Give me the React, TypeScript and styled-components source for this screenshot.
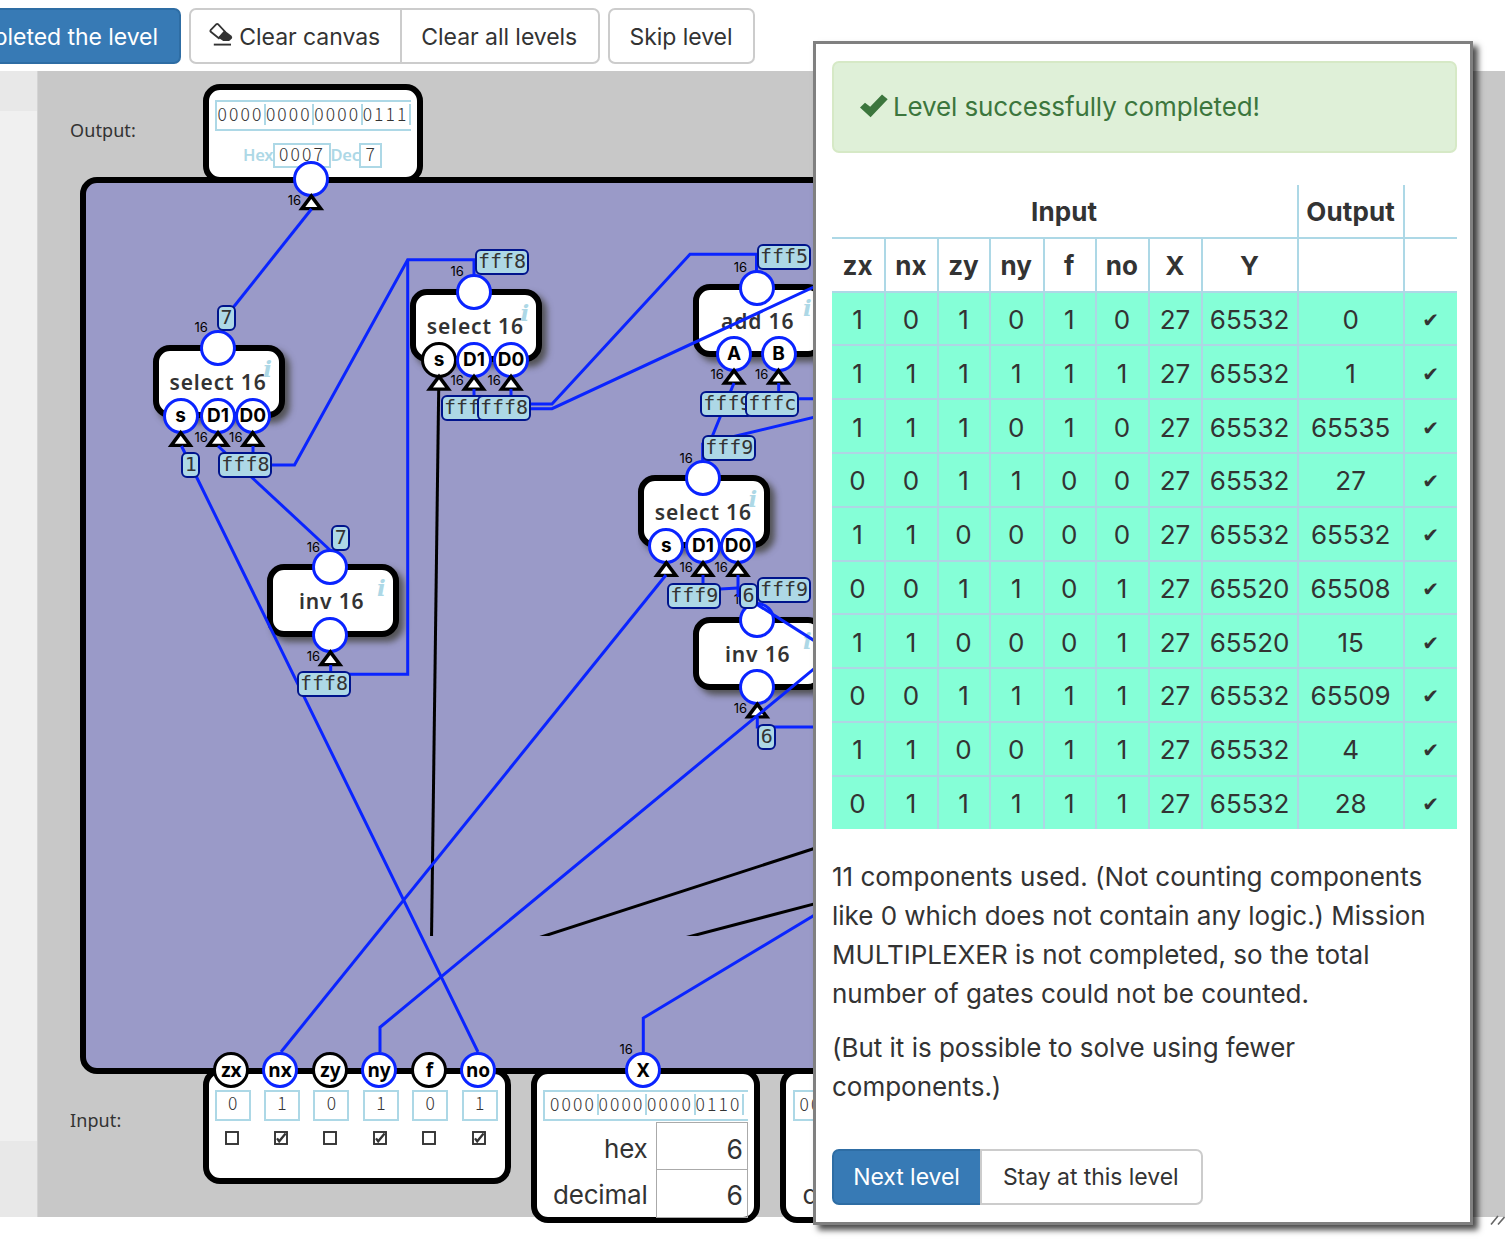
import React from 'react';
import styled, { createGlobalStyle } from 'styled-components';

const BLUE = '#0a24ff';
const PALE = '#add8e6';
const UI = 'Inter, "Liberation Sans", sans-serif';
const LABEL = '"Noto Sans", "Open Sans", sans-serif';

const GlobalStyle = createGlobalStyle`
  * { box-sizing: border-box; }
  html, body { margin: 0; background: #fff; }
  body { font-family: ${UI}; color: #333; overflow: hidden; }
`;

const Page = styled.div`
  position: relative;
  width: 1512px;
  height: 1240px;
  overflow: hidden;
  background: #fff;
`;

/* ---------- toolbar ---------- */

const Toolbar = styled.header`
  display: flex;
  gap: 8px;
  height: 71px;
  padding-top: 8px;
`;

const ButtonGroup = styled.div`
  display: flex;
`;

const Button = styled.button<{ $primary?: boolean; $width: number }>`
  display: flex;
  align-items: center;
  justify-content: center;
  width: ${(p) => p.$width}px;
  height: 56px;
  padding: 1px 1px 0 0;
  border: 2px solid ${(p) => (p.$primary ? '#2e6da4' : '#ccc')};
  border-radius: 7px;
  background: ${(p) => (p.$primary ? '#377ab5' : '#fff')};
  color: ${(p) => (p.$primary ? '#fff' : '#333')};
  font: 400 23px ${UI};
  letter-spacing: -0.05px;
  white-space: nowrap;

  ${ButtonGroup} > &:not(:last-child) {
    border-top-right-radius: 0;
    border-bottom-right-radius: 0;
  }
  ${ButtonGroup} > &:not(:first-child) {
    margin-left: -2px;
    border-top-left-radius: 0;
    border-bottom-left-radius: 0;
  }
`;

const CheckLevelButton = styled(Button)`
  justify-content: flex-end;
  padding-right: 21px;
  border-top-left-radius: 0;
  border-bottom-left-radius: 0;
  border-left: 0;
  overflow: hidden;
`;

const EraserSvg = styled.svg`
  width: 24px;
  height: 26px;
  margin: -5px 6px 0 0;
`;

const Eraser = () => (
  <EraserSvg viewBox="0 0 24 26">
    <path d="M1.6 9.2 L7.4 3.2 Q8.2 2.5 9 3.2 L15.8 10.4 L9.8 17.2 L1.8 10.8 Q1 10 1.6 9.2Z" fill="none" stroke="#333" strokeWidth="1.8" />
    <path d="M15.6 9.6 L22.5 14.8 Q23.8 16.2 22.8 17.6 L20.8 19.4 Q20 20.1 18.4 20.1 L14.2 20.1 L9.2 16.6Z" fill="#333" />
    <path d="M4.8 23.6 H22" stroke="#333" strokeWidth="1.9" />
  </EraserSvg>
);

/* ---------- workspace ---------- */

const Workspace = styled.main`
  display: grid;
  grid-template-columns: 37px 1468px;
  height: 1145.5px;
`;

const SidePanel = styled.aside`
  display: flex;
  flex-direction: column;
  background: #f0f0f0;
`;

const SideStrip = styled.div<{ $height: number; $bottom?: boolean }>`
  height: ${(p) => p.$height}px;
  margin-top: ${(p) => (p.$bottom ? 'auto' : '0')};
  background: #e8e8e8;
`;

const Canvas = styled.section`
  position: relative;
  background: #c8c8c8;
  box-shadow: inset 1px 0 #d4d4d4;
`;

/* Free drawing plane whose origin is the top left of the window */
const Plane = styled.div`
  position: absolute;
  left: -37px;
  top: -71px;
  width: 813px;
  height: 1240px;
  overflow: hidden;
`;

const Placed = styled.div<{ $x: number; $y: number }>`
  position: absolute;
  left: ${(p) => p.$x}px;
  top: ${(p) => p.$y}px;
`;

const AreaLabel = styled(Placed)`
  font: 450 18px/24px ${LABEL};
  letter-spacing: 0.1px;
`;

const Board = styled(Placed)`
  width: 900px;
  height: 896.5px;
  border: 6px solid #000;
  border-radius: 17px;
  background: #9a9ac8;
`;

const IOBox = styled(Placed)<{ $w: number; $h: number }>`
  width: ${(p) => p.$w}px;
  height: ${(p) => p.$h}px;
  border: 6px solid #000;
  border-radius: 17px;
  background: #fff;
`;

const OutputBox = styled(IOBox)`
  display: flex;
  flex-direction: column;
  padding: 10px 6px 0;
`;

const BitsBox = styled(IOBox)`
  display: grid;
  grid-template-columns: repeat(6, 49.4px);
  align-content: start;
  padding: 16px 0 0 6px;
`;

const WordBox = styled(IOBox)`
  display: flex;
  flex-direction: column;
  padding: 16px 6px 0 6.5px;
`;

const Binary = styled.div<{ $inset: number }>`
  display: flex;
  width: ${(p) => 196 + (p.$inset > 2 ? 9 : 0)}px;
  height: 31px;
  padding: 2px 0 0 ${(p) => p.$inset}px;
  border: 2px solid ${PALE};
  border-right: 0;
`;

const thinDigits = `
  font-family: "Noto Sans CJK SC", "DejaVu Sans Light", sans-serif;
  font-weight: 300;
  font-size: 17.5px;
  letter-spacing: 2.1px;
`;

const Nibble = styled.span`
  ${thinDigits}
  width: 48.5px;
  height: 21px;
  border-right: 2px solid ${PALE};
  line-height: 19px;
`;

const Readouts = styled.div`
  display: flex;
  align-items: center;
  height: 25px;
  margin: 12px 0 0 28px;
  color: ${PALE};
  font: 600 16.5px/22px ${LABEL};
  letter-spacing: -0.3px;
`;

const Readout = styled.span<{ $w: number }>`
  ${thinDigits}
  width: ${(p) => p.$w}px;
  height: 25px;
  padding-left: 4.5px;
  border: 2px solid ${PALE};
  color: #333;
  line-height: 18px;
`;

const ReadoutName = styled.span<{ $w: number }>`
  width: ${(p) => p.$w}px;
  height: 24px;
`;

const BitCell = styled.div`
  display: flex;
  flex-direction: column;
  gap: 11px;
`;

const BitValue = styled.div`
  ${thinDigits}
  width: 36px;
  height: 31px;
  padding-left: 2px;
  border: 2px solid ${PALE};
  line-height: 22px;
  text-align: center;
`;

const BitCheck = styled.svg`
  width: 14px;
  height: 14px;
  margin: -1px 0 0 10px;
`;

const NumberRows = styled.div`
  margin-top: 1px;
`;

const NumberRow = styled.div`
  display: grid;
  grid-template-columns: 113px 92px;
  grid-template-rows: 48.5px;
  height: 47.5px;
  font: 400 26px/48px ${UI};
  text-align: right;
`;

const NumberName = styled.span`
  padding: 3px 8.5px 0 0;
  letter-spacing: -0.2px;

  ${NumberRow}:last-child > & { padding-top: 2px; }
`;

const NumberValue = styled.span`
  height: 48.5px;
  padding: 3px 4px 0 0;
  border: 1px solid #aaa;
  font-size: 26.5px;
  line-height: 46px;

  ${NumberRow}:last-child > & { padding-top: 2px; }
`;

/* ---------- diagram parts ---------- */

const NodeBody = styled(Placed)`
  display: flex;
  align-items: center;
  justify-content: center;
  width: 132px;
  height: 73px;
  padding: 1px 2px 0 0;
  border: 6px solid #000;
  border-radius: 17px;
  background: #fff;
  box-shadow: 5px 5px 6px rgba(60, 60, 50, 0.75);
  font: 650 21px/30px ${LABEL};
  letter-spacing: 0.85px;
`;

const Info = styled.i`
  position: absolute;
  right: 7px;
  top: 3px;
  color: ${PALE};
  font: italic 700 23px/30px "DejaVu Serif", serif;
  letter-spacing: 0;
`;

const Ring = styled(Placed)<{ $on: boolean; $lucida?: boolean }>`
  display: flex;
  align-items: center;
  justify-content: center;
  width: 36px;
  height: 36px;
  margin: -18px 0 0 -18px;
  border: 3px solid ${(p) => (p.$on ? BLUE : '#000')};
  border-radius: 50%;
  background: #fff;
  color: #000;
  font: 700 19px/24px ${(p) => (p.$lucida ? LABEL : UI)};
`;

const BusWidth = styled(Placed)`
  color: #000;
  font: 400 13px/16px ${UI};
`;

const Drawing = styled.svg`
  position: absolute;
  left: 0;
  top: 0;
`;

const Badge = styled(Placed)<{ $one: boolean }>`
  width: ${(p) => (p.$one ? 19 : 54)}px;
  height: 26px;
  border: 2px solid #00148c;
  border-radius: 6px;
  background: ${PALE};
  font: 400 20px/21.5px "DejaVu Sans Mono", monospace;
  text-align: center;
  white-space: nowrap;
`;

type Pin = { x: number; y: number; name?: string; on?: boolean; lucida?: boolean; bus?: 'above' | 'below'; arrow?: boolean };

const nodes = [
  { x: 153, y: 345, title: 'select 16' },
  { x: 410.3, y: 289, title: 'select 16' },
  { x: 692.7, y: 284, title: 'add 16' },
  { x: 638.3, y: 475, title: 'select 16' },
  { x: 266.7, y: 564, title: 'inv 16' },
  { x: 692.7, y: 617, title: 'inv 16' },
];

const pins: Pin[] = [
  { x: 311.3, y: 179, bus: 'below', arrow: true },
  { x: 218, y: 347.7, bus: 'above' },
  { x: 180.7, y: 415.7, name: 's', arrow: true },
  { x: 218, y: 415.7, name: 'D1', bus: 'below', arrow: true },
  { x: 252.7, y: 415.7, name: 'D0', bus: 'below', arrow: true },
  { x: 474, y: 291.7, bus: 'above' },
  { x: 439, y: 359.5, name: 's', on: false, arrow: true },
  { x: 474, y: 359.5, name: 'D1', bus: 'below', arrow: true },
  { x: 511, y: 359.5, name: 'D0', bus: 'below', arrow: true },
  { x: 757.3, y: 287.7, bus: 'above' },
  { x: 734, y: 353.5, name: 'A', bus: 'below', arrow: true },
  { x: 778.5, y: 353.5, name: 'B', bus: 'below', arrow: true },
  { x: 703, y: 478, bus: 'above' },
  { x: 666.3, y: 545.7, name: 's', arrow: true },
  { x: 703, y: 545.7, name: 'D1', bus: 'below', arrow: true },
  { x: 738, y: 545.7, name: 'D0', bus: 'below', arrow: true },
  { x: 330.4, y: 567.3, bus: 'above' },
  { x: 330.4, y: 635, bus: 'below', arrow: true },
  { x: 757.3, y: 619.5, bus: 'above' },
  { x: 757.3, y: 687.3, bus: 'below', arrow: true },
  { x: 231.4, y: 1069.7, name: 'zx', on: false, lucida: true },
  { x: 280, y: 1069.7, name: 'nx', lucida: true },
  { x: 330.4, y: 1069.7, name: 'zy', on: false, lucida: true },
  { x: 379, y: 1069.7, name: 'ny', lucida: true },
  { x: 429.4, y: 1069.7, name: 'f', on: false, lucida: true },
  { x: 478, y: 1069.7, name: 'no', lucida: true },
  { x: 643, y: 1069.7, name: 'X', lucida: true, bus: 'above' },
];

const liveWires = [
  '311.5,209 228,314',
  '181.5,446 197,478 478,1052',
  '218,446 331,551',
  '253,446 253,465 294.5,465 407.7,259.7 474,259.7 474,275',
  '407.7,259.7 407.7,674.3 330.7,674.3 330.7,665',
  '474,389 474,404 552,404 690,254.3 756.5,254.3 756.5,271',
  '511,389 511,408.7 552,408.7 814,287',
  '734,383 703,459',
  '814,417.3 702.7,444 702.7,461',
  '778.7,383 778.7,398.7 814,398.7',
  '666,575 281,1052',
  '703,575 703,590 738,588',
  '738,575 738,597',
  '750,600 814,640.5',
  '757.3,717 757.3,727 814,727',
  '380,1052 380,1027.3 814,668.8',
  '643.3,1052 643.3,1018 814,915.5',
];

const idleWires = ['438.7,389 431.5,940', '534,939.3 814,848.5', '682,938.6 814,904'];

const badges: [number, number, string][] = [
  [217, 305.3, '7'],
  [181.4, 451.7, '1'],
  [218.4, 451.7, 'fff8'],
  [475, 249, 'fff8'],
  [441, 395.3, 'ffff'],
  [477, 395.3, 'fff8'],
  [331.3, 524.5, '7'],
  [297, 671, 'fff8'],
  [757, 244, 'fff5'],
  [700.4, 391, 'fff9'],
  [745.3, 391, 'fffc'],
  [702.3, 435.3, 'fff9'],
  [667.3, 582.5, 'fff9'],
  [739, 582.5, '6'],
  [757, 577.3, 'fff9'],
  [757.3, 723.7, '6'],
];

const Word = ({ inset, nibbles }: { inset: number; nibbles: string[] }) => (
  <Binary $inset={inset}>
    {nibbles.map((n, i) => (
      <Nibble key={i}>{n}</Nibble>
    ))}
  </Binary>
);

const Numbers = ({ value }: { value?: number }) => (
  <NumberRows>
    {['hex', 'decimal'].map((n) => (
      <NumberRow key={n}>
        <NumberName>{n}</NumberName>
        <NumberValue>{value}</NumberValue>
      </NumberRow>
    ))}
  </NumberRows>
);

const Diagram = () => (
  <Plane>
    <AreaLabel $x={70} $y={118}>Output:</AreaLabel>
    <AreaLabel $x={70} $y={1108}>Input:</AreaLabel>
    <Board $x={80.3} $y={177} />
    <OutputBox $x={203} $y={84} $w={220} $h={99}>
      <Word inset={0.5} nibbles={['0000', '0000', '0000', '0111']} />
      <Readouts>
        <ReadoutName $w={29.5}>Hex</ReadoutName>
        <Readout $w={58}>0007</Readout>
        <ReadoutName $w={28.5}>Dec</ReadoutName>
        <Readout $w={22.5}>7</Readout>
      </Readouts>
    </OutputBox>
    <BitsBox $x={202.7} $y={1068} $w={308} $h={116}>
      {[0, 1, 0, 1, 0, 1].map((bit, i) => (
        <BitCell key={i}>
          <BitValue>{bit}</BitValue>
          <BitCheck viewBox="0 0 14 14">
            <rect x="1" y="1" width="12" height="12" fill="none" stroke="#333" strokeWidth="1.9" />
            {bit === 1 && <path d="M3 7.4 L5.2 10.3 L11.6 2.6" fill="none" stroke="#333" strokeWidth="2.3" />}
          </BitCheck>
        </BitCell>
      ))}
    </BitsBox>
    <WordBox $x={530.5} $y={1068} $w={229.5} $h={154.5}>
      <Word inset={5} nibbles={['0000', '0000', '0000', '0110']} />
      <Numbers value={6} />
    </WordBox>
    <WordBox $x={780} $y={1068} $w={229.5} $h={154.5}>
      <Word inset={5} nibbles={['00']} />
      <Numbers />
    </WordBox>
    {nodes.map((n, i) => (
      <NodeBody key={i} $x={n.x} $y={n.y}>
        {n.title}
        <Info>i</Info>
      </NodeBody>
    ))}
    {pins.map((p, i) => (
      <React.Fragment key={i}>
        <Ring $x={p.x} $y={p.y} $on={p.on !== false} $lucida={p.lucida}>{p.name}</Ring>
        {p.bus && <BusWidth $x={p.x - 23.6} $y={p.y + (p.bus === 'above' ? -28.3 : 12.9)}>16</BusWidth>}
      </React.Fragment>
    ))}
    <Drawing width="813" height="1240" viewBox="0 0 813 1240">
      {pins.filter((p) => p.arrow).map((p, i) => (
        <g key={i} transform={`translate(${p.x} ${p.y})`}>
          <path d="M0 14 L12.9 31.2 H-12.9Z" fill="#000" />
          <path d="M0 20 L6 28 H-6Z" fill="#fff" />
        </g>
      ))}
      <clipPath id="board-floor"><rect x="0" y="0" width="813" height="936" /></clipPath>
      <g fill="none" stroke="#000" strokeWidth="3" clipPath="url(#board-floor)">
        {idleWires.map((w) => <polyline key={w} points={w} />)}
      </g>
      <g fill="none" stroke={BLUE} strokeWidth="3">
        {liveWires.map((w) => <polyline key={w} points={w} />)}
      </g>
    </Drawing>
    {badges.map(([x, y, v], i) => (
      <Badge key={i} $x={x} $y={y} $one={v.length === 1}>{v}</Badge>
    ))}
  </Plane>
);

const GripSvg = styled.svg`
  position: absolute;
  right: 0;
  bottom: -9px;
  width: 16px;
  height: 12px;
`;

/* ---------- result dialog ---------- */

const Dialog = styled.div`
  position: absolute;
  left: 813px;
  top: 41px;
  width: 660px;
  height: 1184px;
  padding: 16.5px 13.5px 0 16px;
  border: 3px solid #808080;
  background: #fff;
  box-shadow: 5px 5px 6px rgba(0, 0, 0, 0.7);
`;

const Alert = styled.div`
  display: flex;
  align-items: center;
  gap: 5px;
  width: 625px;
  height: 92px;
  padding: 0 0 0 26px;
  border: 2px solid #d6e9c6;
  border-radius: 7px;
  background: #dff0d8;
  color: #3c763d;
  font-size: 26px;
  letter-spacing: -0.13px;
`;

const AlertIcon = styled.svg`
  width: 28px;
  height: 24px;
  margin-top: -2px;
`;

const Results = styled.table`
  width: 625px;
  margin-top: 32px;
  border-collapse: collapse;
  table-layout: fixed;
  font-size: 26px;
  line-height: 30px;
  text-align: center;
`;

const Col = styled.col<{ $w: number }>`
  width: ${(p) => p.$w}px;
`;

const Row = styled.tr<{ $h: number; $ok?: boolean }>`
  height: ${(p) => p.$h}px;
  background: ${(p) => (p.$ok ? '#85ffd7' : 'transparent')};
`;

const edges = `
  padding: 3px 1px 0 0;
  border: 2px solid ${PALE};
  &:first-child { border-left: 0; }
  &:last-child { border-right: 0; }
`;

const Head = styled.th`
  ${edges}
  font-weight: 680;
  letter-spacing: 0.1px;
  ${Row}:first-child > & { border-top: 0; }
`;

const Cell = styled.td`
  ${edges}
  border-color: #aed6e4;
  letter-spacing: -0.05px;
  ${Row}:last-child > & { border-bottom: 0; }
`;

const Tick = styled.span`
  display: block;
  padding-top: 1px;
  font: 400 20px/29px "DejaVu Sans", sans-serif;
`;

const Messages = styled.div`
  margin: 28.5px 0 41.5px;
`;

const Message = styled.p<{ $gap: number }>`
  width: 615px;
  margin: 0 0 ${(p) => p.$gap}px;
  font-size: 26px;
  line-height: 38.9px;
  letter-spacing: -0.02px;
  white-space: pre-line;
`;

const rows = [
  [1, 0, 1, 0, 1, 0, 27, 65532, 0],
  [1, 1, 1, 1, 1, 1, 27, 65532, 1],
  [1, 1, 1, 0, 1, 0, 27, 65532, 65535],
  [0, 0, 1, 1, 0, 0, 27, 65532, 27],
  [1, 1, 0, 0, 0, 0, 27, 65532, 65532],
  [0, 0, 1, 1, 0, 1, 27, 65520, 65508],
  [1, 1, 0, 0, 0, 1, 27, 65520, 15],
  [0, 0, 1, 1, 1, 1, 27, 65532, 65509],
  [1, 1, 0, 0, 1, 1, 27, 65532, 4],
  [0, 1, 1, 1, 1, 1, 27, 65532, 28],
];

const columns = [53, 53, 52, 53.5, 52.5, 53, 53, 96, 106, 53];

const ResultDialog = () => (
  <Dialog>
    <Alert>
      <AlertIcon viewBox="0 0 28 24">
        <path d="M0 13.5 L5 8.8 L10.2 12.8 L22 0.6 L27.7 5.2 L10.6 23.2Z" fill="#3c763d" />
      </AlertIcon>
      Level successfully completed!
    </Alert>
    <Results>
      <colgroup>
        {columns.map((w, i) => <Col key={i} $w={w} />)}
      </colgroup>
      <thead>
        <Row $h={53.3}>
          <Head colSpan={8}>Input</Head>
          <Head>Output</Head>
          <Head />
        </Row>
        <Row $h={53.9}>
          {['zx', 'nx', 'zy', 'ny', 'f', 'no', 'X', 'Y', '', ''].map((h, i) => <Head key={i}>{h}</Head>)}
        </Row>
      </thead>
      <tbody>
        {rows.map((r, i) => (
          <Row key={i} $h={53.78} $ok>
            {r.map((v, j) => <Cell key={j}>{v}</Cell>)}
            <Cell><Tick>✔</Tick></Cell>
          </Row>
        ))}
      </tbody>
    </Results>
    <Messages>
      <Message $gap={16}>
        {'11 components used. (Not counting components\nlike 0 which does not contain any logic.) Mission\nMULTIPLEXER is not completed, so the total\nnumber of gates could not be counted.'}
      </Message>
      <Message $gap={0}>{'(But it is possible to solve using fewer\ncomponents.)'}</Message>
    </Messages>
    <ButtonGroup>
      <Button $primary $width={150}>Next level</Button>
      <Button $width={222.5}>Stay at this level</Button>
    </ButtonGroup>
  </Dialog>
);

export default function App() {
  return (
    <Page>
      <GlobalStyle />
      <Toolbar>
        <CheckLevelButton $primary $width={181}>pleted the level</CheckLevelButton>
        <ButtonGroup>
          <Button $width={212.5}><Eraser />Clear canvas</Button>
          <Button $width={200.5}>Clear all levels</Button>
        </ButtonGroup>
        <Button $width={147}>Skip level</Button>
      </Toolbar>
      <Workspace>
        <SidePanel>
          <SideStrip $height={40} />
          <SideStrip $height={76} $bottom />
        </SidePanel>
        <Canvas>
          <Diagram />
          <GripSvg viewBox="0 0 16 12">
            <path d="M2 10.5 L9 2 M9 10.5 L15.5 3" stroke="#666" strokeWidth="1.6" fill="none" />
          </GripSvg>
        </Canvas>
      </Workspace>
      <ResultDialog />
    </Page>
  );
}
